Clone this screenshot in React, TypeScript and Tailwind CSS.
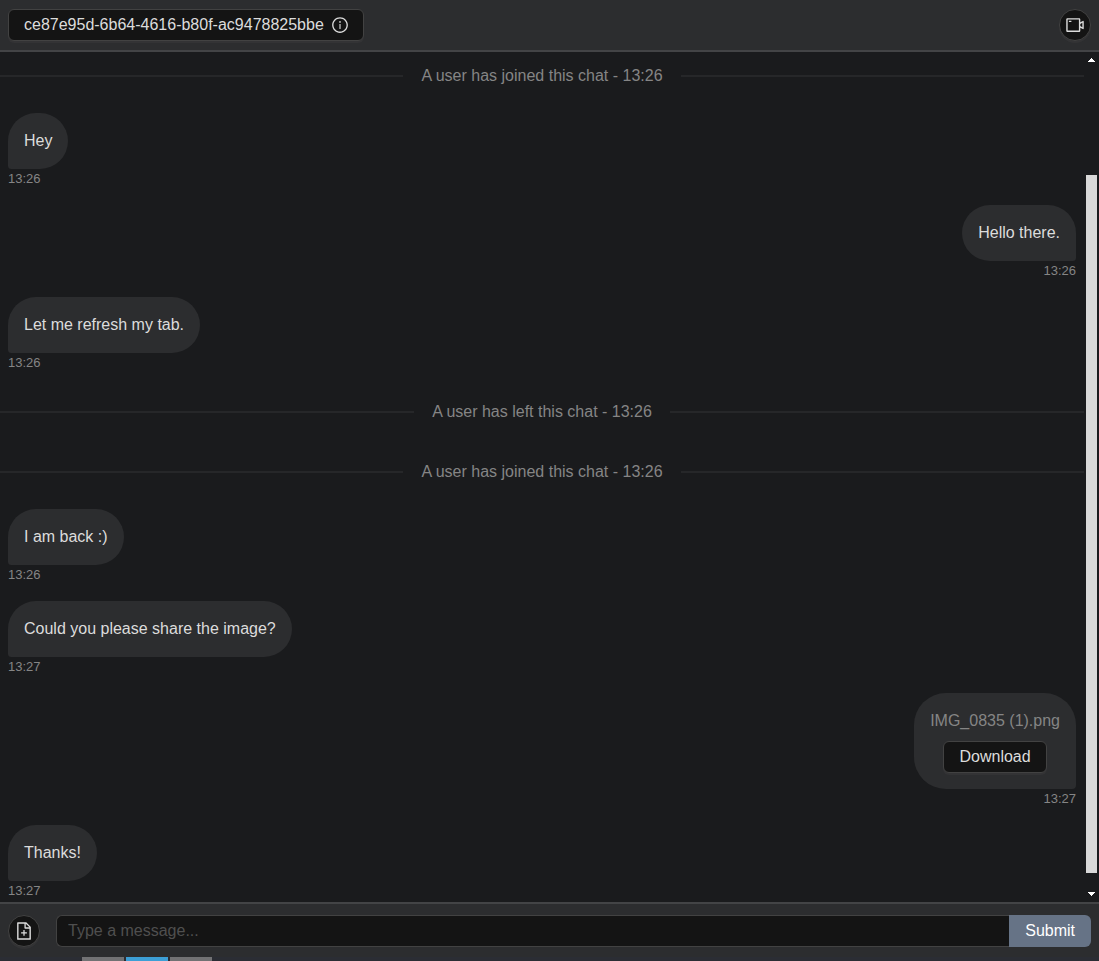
import React from "react";
import { AiOutlineFileAdd, AiOutlineInfoCircle, AiOutlineVideoCamera } from "react-icons/ai";

type Item =
  | { kind: "event"; text: string }
  | { kind: "message"; text: string; time: string; own?: boolean }
  | { kind: "file"; name: string; time: string; own?: boolean };

const items: Item[] = [
  { kind: "event", text: "A user has joined this chat - 13:26" },
  { kind: "message", text: "Hey", time: "13:26" },
  { kind: "message", text: "Hello there.", time: "13:26", own: true },
  { kind: "message", text: "Let me refresh my tab.", time: "13:26" },
  { kind: "event", text: "A user has left this chat - 13:26" },
  { kind: "event", text: "A user has joined this chat - 13:26" },
  { kind: "message", text: "I am back :)", time: "13:26" },
  { kind: "message", text: "Could you please share the image?", time: "13:27" },
  { kind: "file", name: "IMG_0835 (1).png", time: "13:27", own: true },
  { kind: "message", text: "Thanks!", time: "13:27" },
];

const buttonLook =
  "flex h-8 items-center border border-[#424242] bg-[#141414] text-[#dcdcdc] shadow-[0_2px_0_#333335]";

function ChatEvent({ text }: { text: string }) {
  return (
    <li className="flex h-11 items-center gap-[18px] pt-0.5 text-[#858585]">
      <span className="h-0.5 flex-1 bg-[#262729]" />
      <span>{text}</span>
      <span className="h-0.5 flex-1 bg-[#262729]" />
    </li>
  );
}

function Bubble({ own, time, children }: { own?: boolean; time: string; children: React.ReactNode }) {
  return (
    <li className={own ? "flex flex-col items-end px-2" : "flex flex-col items-start px-2"}>
      <div
        className={
          own
            ? "rounded-[32px] rounded-br-sm bg-[#2c2d2f] p-4"
            : "rounded-[32px] rounded-bl-sm bg-[#2c2d2f] p-4"
        }
      >
        {children}
      </div>
      <time className="text-[13px] leading-5 text-[#858585]">{time}</time>
    </li>
  );
}

function Scrollbar() {
  return (
    <div aria-hidden="true" className="flex w-[15px] shrink-0 flex-col items-center">
      <svg className="h-[15px] w-[15px] fill-white" viewBox="0 0 15 15" shapeRendering="crispEdges">
        <path d="M4 10h7L7.5 6z" />
      </svg>
      <div className="mt-[108px] mb-3.5 w-[11px] flex-1 bg-[#d9d9d9]" />
      <svg className="h-[15px] w-[15px] fill-white" viewBox="0 0 15 15" shapeRendering="crispEdges">
        <path d="M4 5h7L7.5 9z" />
      </svg>
    </div>
  );
}

export default function App() {
  return (
    <div className="flex h-screen flex-col bg-[#1a1b1d] font-['Liberation_Sans',Arial,sans-serif] text-base text-[#dcdcdc]">
      <header className="flex items-center justify-between border-b-2 border-[#434446] bg-[#2c2d2f] px-2 py-[9px]">
        <button type="button" className={`${buttonLook} gap-[7px] rounded-md pr-3.5 pl-[15px]`}>
          <span>ce87e95d-6b64-4616-b80f-ac9478825bbe</span>
          <AiOutlineInfoCircle className="size-[18px] shrink-0" />
        </button>
        <button type="button" aria-label="Start video call" className={`${buttonLook} w-8 justify-center rounded-full`}>
          <AiOutlineVideoCamera className="size-5 shrink-0" />
        </button>
      </header>

      <main className="flex min-h-0 flex-1">
        <ul className="flex flex-1 flex-col gap-4 overflow-hidden pt-px">
          {items.map((item, i) => {
            if (item.kind === "event") return <ChatEvent key={i} text={item.text} />;
            return (
              <Bubble key={i} own={item.own} time={item.time}>
                {item.kind === "message" ? (
                  <p>{item.text}</p>
                ) : (
                  <div className="flex flex-col items-center gap-2">
                    <span className="text-[#858585]">{item.name}</span>
                    <button type="button" className={`${buttonLook} rounded-md px-[15px]`}>
                      Download
                    </button>
                  </div>
                )}
              </Bubble>
            );
          })}
        </ul>
        <Scrollbar />
      </main>

      <footer className="border-t-2 border-[#434446] bg-[#2c2d2f]">
        <form className="flex gap-4 px-2 pt-[11px] pb-2.5" onSubmit={(e) => e.preventDefault()}>
          <button type="button" aria-label="Attach a file" className={`${buttonLook} w-8 shrink-0 justify-center rounded-full`}>
            <AiOutlineFileAdd className="size-5 shrink-0" />
          </button>
          <div className="flex flex-1">
            <input
              type="text"
              aria-label="Message"
              placeholder="Type a message..."
              className="h-8 min-w-0 flex-1 rounded-l-md border border-r-0 border-[#424242] bg-[#141414] px-[11px] outline-none placeholder:text-[#4f4f4f]"
            />
            <button type="submit" className="h-8 rounded-r-md bg-[#667386] px-4 text-white">
              Submit
            </button>
          </div>
        </form>
        <div className="flex h-1 gap-0.5 bg-[#2b2d34] pl-[82px]">
          <span className="w-[42px] bg-[#727274]" />
          <span className="w-[42px] bg-[#3d9fd6]" />
          <span className="w-[42px] bg-[#727274]" />
        </div>
      </footer>
    </div>
  );
}
